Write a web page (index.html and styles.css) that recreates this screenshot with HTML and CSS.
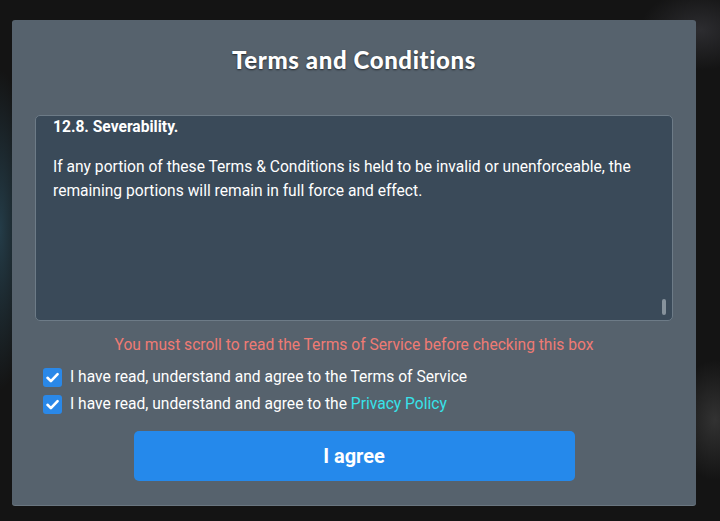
FILE: index.html
```html
<!DOCTYPE html>
<html lang="en">
<head>
    <meta charset="UTF-8">
    <meta name="viewport" content="width=device-width, initial-scale=1.0">
    <title>Terms and Conditions</title>
    <link rel="stylesheet" href="styles.css">
</head>
<body>
    <div class="modal">
        <h2 class="modal-title">Terms and Conditions</h2>
        <div class="terms-box">
            <div class="terms-text">
                <h4>12.8. Severability.</h4>
                <p>If any portion of these Terms &amp; Conditions is held to be invalid or unenforceable, the remaining portions will remain in full force and effect.</p>
            </div>
            <span class="scroll-thumb"></span>
        </div>
        <p class="warning">You must scroll to read the Terms of Service before checking this box</p>
        <label class="check-row">
            <svg class="check" width="19" height="19" viewBox="0 0 19 19">
                <rect width="19" height="19" rx="3" fill="#2a88e8"/>
                <path d="M4.5 9.8 L7.9 13.1 L14.6 6.2" fill="none" stroke="#fff" stroke-width="2.6" stroke-linecap="round" stroke-linejoin="round"/>
            </svg>
            <span>I have read, understand and agree to the Terms of Service</span>
        </label>
        <label class="check-row">
            <svg class="check" width="19" height="19" viewBox="0 0 19 19">
                <rect width="19" height="19" rx="3" fill="#2a88e8"/>
                <path d="M4.5 9.8 L7.9 13.1 L14.6 6.2" fill="none" stroke="#fff" stroke-width="2.6" stroke-linecap="round" stroke-linejoin="round"/>
            </svg>
            <span>I have read, understand and agree to the <a href="#" class="link">Privacy Policy</a></span>
        </label>
        <button class="agree-button">I agree</button>
    </div>
</body>
</html>
```

FILE: styles.css
```css
body {
    margin: 0;
    min-height: 521px;
    font-family: Roboto, 'Liberation Sans', sans-serif;
    background-color: #141414;
    background-image:
        radial-gradient(ellipse 30px 160px at 0 230px, rgba(40, 70, 85, 0.8), transparent),
        radial-gradient(ellipse 60px 40px at 700px 30px, rgba(90, 90, 100, 0.35), transparent),
        radial-gradient(ellipse 40px 60px at 715px 420px, rgba(120, 120, 120, 0.3), transparent);
    overflow: hidden;
}
.modal {
    box-sizing: border-box;
    width: 684px;
    height: 485px;
    margin: 20px 0 0 12px;
    padding: 25px 23px 24px;
    background-color: #56626d;
    border-radius: 3px;
    box-shadow: 0 1px 0 #6a7680;
    display: flex;
    flex-direction: column;
    align-items: center;
}
.modal-title {
    margin: 0 0 40px;
    font-family: Lato, sans-serif;
    font-weight: 900;
    font-size: 24px;
    line-height: 30px;
    color: #fff;
    letter-spacing: 0.6px;
    text-shadow: 0 1px 2px rgba(0, 0, 0, 0.6);
}
.terms-box {
    position: relative;
    box-sizing: border-box;
    width: 638px;
    height: 206px;
    background-color: #3a4a59;
    border: 1px solid #6d7b87;
    border-radius: 5px;
    overflow: hidden;
}
.terms-text {
    padding: 1px 17px 0;
    color: #fff;
    font-size: 15.6px;
}
.terms-text h4 {
    margin: 0 0 18px;
    font-weight: 700;
    font-size: 15.6px;
    line-height: 20px;
}
.terms-text p {
    margin: 0;
    line-height: 24px;
}
.scroll-thumb {
    position: absolute;
    right: 6px;
    bottom: 5px;
    width: 4px;
    height: 16px;
    border-radius: 2px;
    background-color: #86929c;
}
.warning {
    margin: 14px 0 12px;
    font-size: 15.6px;
    line-height: 20px;
    color: #ef7b74;
}
.check-row {
    align-self: stretch;
    display: flex;
    align-items: center;
    gap: 8px;
    padding-left: 8px;
    height: 20px;
    margin-bottom: 7px;
    font-size: 15.6px;
    color: #fff;
}
.check {
    flex: none;
}
.link {
    color: #37e3ea;
    text-decoration: none;
}
.agree-button {
    margin-top: 10px;
    width: 441px;
    height: 50px;
    border: none;
    border-radius: 5px;
    background-color: #2589eb;
    color: #fff;
    font-family: Roboto, sans-serif;
    font-weight: 700;
    font-size: 20px;
    cursor: pointer;
}
```
